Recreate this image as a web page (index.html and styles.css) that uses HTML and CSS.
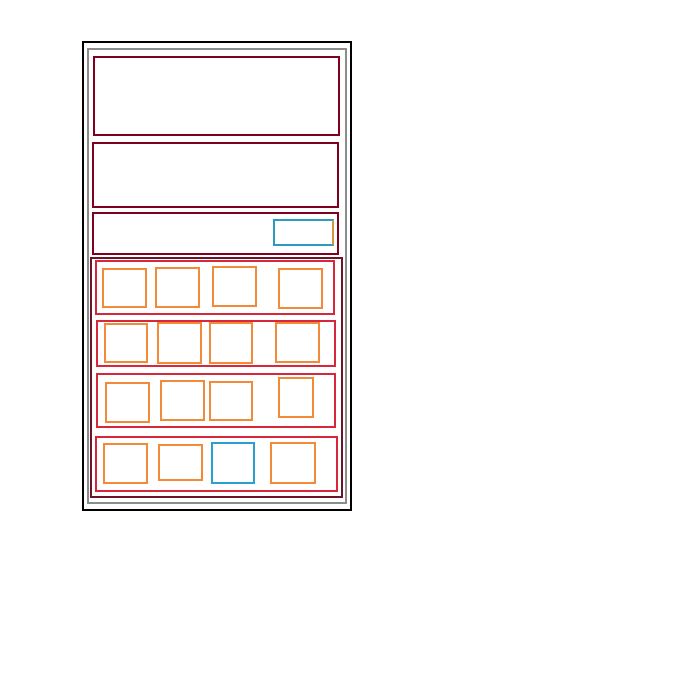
FILE: index.html
```html
<!DOCTYPE html>
<html>
<head>
<meta charset="utf-8">
<link rel="stylesheet" href="styles.css">
</head>
<body>
<div class="frame">
  <div class="panel">
    <div class="block block-a"></div>
    <div class="block block-b"></div>
    <div class="block block-c"><div class="display"></div></div>
    <div class="keypad">
      <div class="row row-1">
        <div class="key"></div><div class="key"></div><div class="key"></div><div class="key"></div>
      </div>
      <div class="row row-2">
        <div class="key"></div><div class="key"></div><div class="key"></div><div class="key"></div>
      </div>
      <div class="row row-3">
        <div class="key"></div><div class="key"></div><div class="key"></div><div class="key"></div>
      </div>
      <div class="row row-4">
        <div class="key"></div><div class="key"></div><div class="key active"></div><div class="key"></div>
      </div>
    </div>
  </div>
</div>
</body>
</html>
```
FILE: styles.css
```css
* { box-sizing: border-box; }
html, body { margin: 0; padding: 0; background: #fff; }
body { font-family: "Liberation Sans", sans-serif; }

.frame {
  margin: 41px 0 0 82px;
  width: 270px;
  height: 470px;
  border: 2px solid #000;
  padding: 5px 3px;
}
.panel {
  width: 260px;
  height: 456px;
  border: 2px solid #8c8c8c;
  display: flex;
  flex-direction: column;
  align-items: flex-start;
}
.block {
  border: 2px solid #80001f;
  width: 247px;
}
.block-a { margin: 6px 0 0 4px; height: 80px; }
.block-b { margin: 6px 0 0 3px; height: 66px; }
.block-c {
  margin: 4px 0 0 3px;
  height: 43px;
  display: flex;
  justify-content: flex-end;
  align-items: flex-start;
  padding: 5px 3px 0 0;
}
.display {
  width: 61px;
  height: 27px;
  border: 2px solid #2b9bc2;
  border-right-color: #d9933f;
}
.keypad {
  margin: 2px 0 0 1px;
  width: 253px;
  height: 241px;
  border: 2px solid #6e1428;
  display: flex;
  flex-direction: column;
  align-items: flex-start;
}
.row {
  border: 2px solid #d8263a;
  width: 240px;
  display: flex;
  align-items: flex-start;
}
.row-1 { margin: 1px 0 0 3px; height: 55px; }
.row-2 { margin: 5px 0 0 4px; height: 47px; }
.row-3 { margin: 6px 0 0 4px; height: 55px; }
.row-4 { margin: 8px 0 0 3px; height: 56px; width: 243px; }

.key {
  border: 2px solid #f28a3a;
  width: 45px;
  height: 41px;
  flex: none;
}
.key.active { border-color: #2a9fd3; }

.row-1 .key:nth-child(1) { margin: 6px 0 0 5px; height: 40px; }
.row-1 .key:nth-child(2) { margin: 5px 0 0 8px; }
.row-1 .key:nth-child(3) { margin: 4px 0 0 12px; }
.row-1 .key:nth-child(4) { margin: 6px 0 0 21px; }

.row-2 .key:nth-child(1) { margin: 1px 0 0 6px; width: 44px; height: 40px; }
.row-2 .key:nth-child(2) { margin: 0 0 0 9px; height: 42px; }
.row-2 .key:nth-child(3) { margin: 0 0 0 7px; width: 44px; height: 42px; }
.row-2 .key:nth-child(4) { margin: 0 0 0 22px; }

.row-3 .key:nth-child(1) { margin: 7px 0 0 7px; }
.row-3 .key:nth-child(2) { margin: 5px 0 0 10px; }
.row-3 .key:nth-child(3) { margin: 6px 0 0 4px; width: 44px; height: 40px; }
.row-3 .key:nth-child(4) { margin: 2px 0 0 25px; width: 36px; }

.row-4 .key:nth-child(1) { margin: 5px 0 0 6px; }
.row-4 .key:nth-child(2) { margin: 6px 0 0 10px; height: 37px; }
.row-4 .key:nth-child(3) { margin: 4px 0 0 8px; width: 44px; height: 42px; }
.row-4 .key:nth-child(4) { margin: 4px 0 0 15px; width: 46px; height: 42px; }
```
